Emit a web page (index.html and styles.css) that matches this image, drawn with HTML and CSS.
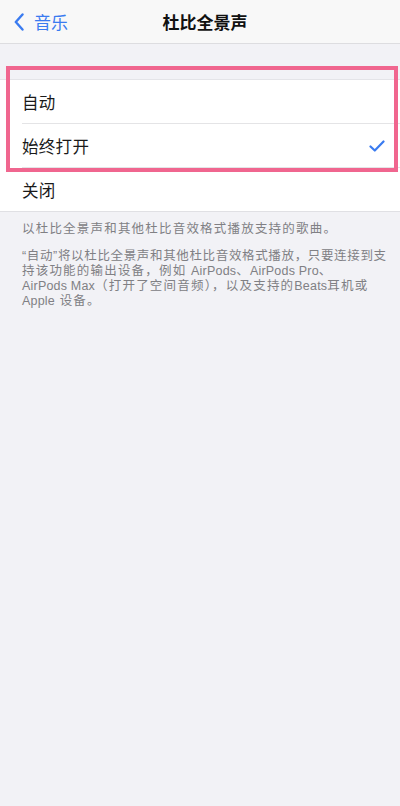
FILE: index.html
```html
<!DOCTYPE html>
<html lang="zh-CN">
<head>
<meta charset="utf-8">
<link rel="stylesheet" href="styles.css">
</head>
<body>
<header class="nav">
  <div class="back">
    <svg class="chev" width="10" height="18" viewBox="0 0 10 18"><path d="M8.5 1.5 L1.8 9 L8.5 16.5" fill="none" stroke="#3a7bf0" stroke-width="2.4" stroke-linecap="round" stroke-linejoin="round"/></svg>
    <span class="back-text">音乐</span>
  </div>
  <div class="title">杜比全景声</div>
</header>
<main>
  <section class="group">
    <div class="row"><span class="label">自动</span></div>
    <div class="row"><span class="label">始终打开</span>
      <svg class="check" width="16" height="12" viewBox="0 0 16 12"><path d="M1.5 6.5 L5.8 10.5 L14.5 1.5" fill="none" stroke="#3a7bf0" stroke-width="2.2" stroke-linecap="round" stroke-linejoin="round"/></svg>
    </div>
    <div class="row last"><span class="label">关闭</span></div>
    <div class="highlight"></div>
  </section>
  <div class="footer">
    <p>以杜比全景声和其他杜比音效格式播放支持的歌曲。</p>
    <p><span class="tight">“自动”将以杜比全景声和其他杜比音效格式播放，只要连接到支</span><br>持该功能的输出设备，例如 <span class="lat">AirPods</span>、<span class="lat">AirPods Pro</span>、<br><span class="lat">AirPods Max</span>（打开了空间音频），以及支持的<span class="lat">Beats</span>耳机或<br><span class="lat">Apple</span> 设备。</p>
  </div>
</main>
</body>
</html>
```
FILE: styles.css
```css
html, body {
  margin: 0;
  padding: 0;
}
body {
  width: 400px;
  height: 806px;
  background: #f2f2f6;
  font-family: "Noto Sans CJK SC", "Noto Sans", sans-serif;
  color: #111;
  overflow: hidden;
}
.nav {
  height: 43px;
  background: #f8f8f8;
  border-bottom: 1px solid #dddde0;
  display: flex;
  align-items: center;
  position: relative;
}
.back {
  display: flex;
  align-items: center;
  padding-left: 14px;
  gap: 10px;
}
.chev {
  display: block;
}
.back-text {
  color: #3a7bf0;
  font-size: 17px;
  line-height: 20px;
}
.title {
  position: absolute;
  left: 0;
  right: 0;
  top: 0;
  height: 43px;
  line-height: 43px;
  text-align: center;
  padding-left: 10px;
  font-size: 17px;
  font-weight: 600;
  pointer-events: none;
}
main {
  padding-top: 35px;
}
.group {
  position: relative;
  background: #fff;
  border-top: 1px solid #e4e4e8;
  border-bottom: 1px solid #e0e0e4;
}
.row {
  height: 44px;
  margin-left: 22px;
  padding-right: 15px;
  display: flex;
  align-items: center;
  justify-content: space-between;
  border-bottom: 1px solid #e4e4e6;
  box-sizing: border-box;
}
.row.last {
  border-bottom: none;
  height: 43px;
}
.label {
  font-size: 16.5px;
  letter-spacing: 0.3px;
  color: #1a1a1a;
}
.check {
  display: block;
}
.highlight {
  position: absolute;
  left: 6px;
  right: 2px;
  top: -14px;
  height: 106px;
  border: 4px solid #f0668f;
  box-sizing: border-box;
  pointer-events: none;
}
.footer {
  padding: 10px 0 0 22px;
  color: #808084;
  font-family: "Liberation Sans", "Noto Sans CJK SC", sans-serif;
  font-size: 12.5px;
  letter-spacing: 1.2px;
  line-height: 15px;
  white-space: nowrap;
}
.footer p {
  margin: 0 0 12px 0;
}
.tight {
  letter-spacing: 0.65px;
}
.lat {
  letter-spacing: 0.2px;
}
```
